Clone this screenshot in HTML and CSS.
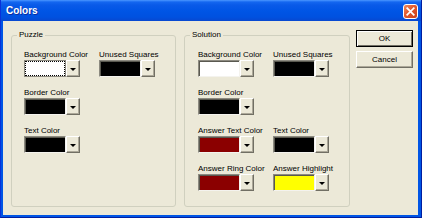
FILE: index.html
```html
<!DOCTYPE html>
<html>
<head>
<meta charset="utf-8">
<link rel="stylesheet" href="styles.css">
</head>
<body>
<div class="window">
  <div class="titlebar">
    <span class="title">Colors</span>
    <span class="close"><svg width="9" height="9" viewBox="0 0 9 9"><path d="M1.2 1.2L7.8 7.8M7.8 1.2L1.2 7.8" stroke="#fff" stroke-width="1.7" stroke-linecap="square"/></svg></span>
  </div>
  <div class="client">
    <fieldset class="group puzzle">
      <legend>Puzzle</legend>
      <div class="grid">
        <div class="field"><div class="lbl">Background Color</div><div class="combo focus"><span class="sw" style="background:#ffffff"></span><span class="dd"><i></i></span></div></div>
        <div class="field"><div class="lbl">Unused Squares</div><div class="combo"><span class="sw" style="background:#000000"></span><span class="dd"><i></i></span></div></div>
        <div class="field"><div class="lbl">Border Color</div><div class="combo"><span class="sw" style="background:#000000"></span><span class="dd"><i></i></span></div></div>
        <div class="field empty"></div>
        <div class="field"><div class="lbl">Text Color</div><div class="combo"><span class="sw" style="background:#000000"></span><span class="dd"><i></i></span></div></div>
      </div>
    </fieldset>
    <fieldset class="group solution">
      <legend>Solution</legend>
      <div class="grid">
        <div class="field"><div class="lbl">Background Color</div><div class="combo"><span class="sw" style="background:#ffffff"></span><span class="dd"><i></i></span></div></div>
        <div class="field"><div class="lbl">Unused Squares</div><div class="combo"><span class="sw" style="background:#000000"></span><span class="dd"><i></i></span></div></div>
        <div class="field"><div class="lbl">Border Color</div><div class="combo"><span class="sw" style="background:#000000"></span><span class="dd"><i></i></span></div></div>
        <div class="field empty"></div>
        <div class="field"><div class="lbl">Answer Text Color</div><div class="combo"><span class="sw" style="background:#8b0000"></span><span class="dd"><i></i></span></div></div>
        <div class="field"><div class="lbl">Text Color</div><div class="combo"><span class="sw" style="background:#000000"></span><span class="dd"><i></i></span></div></div>
        <div class="field"><div class="lbl">Answer Ring Color</div><div class="combo"><span class="sw" style="background:#8b0000"></span><span class="dd"><i></i></span></div></div>
        <div class="field"><div class="lbl">Answer Highlight</div><div class="combo"><span class="sw" style="background:#ffff00"></span><span class="dd"><i></i></span></div></div>
      </div>
    </fieldset>
    <div class="buttons">
      <button class="btn default">OK</button>
      <button class="btn">Cancel</button>
    </div>
  </div>
</div>
</body>
</html>
```
FILE: styles.css
```css
html, body {
  margin: 0;
  padding: 0;
  background: #ffffff;
}
.window {
  width: 422px;
  height: 218px;
  box-sizing: border-box;
  display: flex;
  flex-direction: column;
  background: #0055e5;
  border-left: 1px solid #0831d9;
  border-right: 1px solid #001ea0;
  border-bottom: 1px solid #001ea0;
  font-family: "Liberation Sans", Arial, sans-serif;
  font-size: 8px;
  color: #000;
}
.titlebar {
  height: 21px;
  flex: none;
  display: flex;
  align-items: center;
  justify-content: space-between;
  padding: 0 3px 0 5px;
  background: linear-gradient(#4b97ff 0px, #1467f0 2px, #0a5ae8 5px, #0055e5 11px, #0051e0 17px, #0848d0 21px);
}
.title {
  color: #fff;
  font-weight: bold;
  font-size: 10px;
  text-shadow: 1px 1px 0 #0a2ea0;
}
.close {
  width: 15px;
  height: 15px;
  box-sizing: border-box;
  border: 1px solid #fff;
  border-radius: 3px;
  background: linear-gradient(135deg, #f08a5e 0%, #e2582c 45%, #c8401a 100%);
  display: flex;
  align-items: center;
  justify-content: center;
  margin-top: 1px;
}
.close svg { display: block; }
.client {
  flex: 1;
  margin: 0 3px 2px 2px;
  background: #ece9d8;
  display: flex;
  align-items: flex-start;
  padding: 9px 0 0 8px;
  box-sizing: border-box;
}
.group {
  margin: 0;
  padding: 0 0 0 12px;
  border: 1px solid #d0d0bf;
  border-radius: 3px;
  box-sizing: border-box;
  height: 177px;
}
.puzzle { width: 165px; margin-right: 8px; }
.solution { width: 166px; margin-right: 6px; padding-left: 13px; }
legend {
  margin-left: -7px;
  padding: 0 2px;
  line-height: 10px;
  font-size: 8px;
  color: #000;
}
.solution legend { margin-left: -8px; }
.grid {
  display: grid;
  grid-template-columns: 56px 56px;
  column-gap: 19px;
  row-gap: 11px;
  padding-top: 10px;
}
.lbl {
  line-height: 10px;
  height: 10px;
  white-space: nowrap;
}
.combo {
  display: flex;
  height: 17px;
  width: 56px;
}
.sw {
  width: 42px;
  height: 17px;
  box-sizing: border-box;
  border: 1px solid;
  border-color: #8c8a80 #f4f3ee #f4f3ee #8c8a80;
  box-shadow: inset 1px 1px 0 #5a5950;
  display: block;
}
.focus .sw {
  border: 1px solid #8c8a80;
  box-shadow: none;
  outline: 1px dotted #000;
  outline-offset: -2px;
}
.dd {
  width: 14px;
  height: 17px;
  box-sizing: border-box;
  background: #ece9d8;
  border: 1px solid;
  border-color: #fff #716f64 #716f64 #fff;
  box-shadow: inset -1px -1px 0 #aca899;
  display: flex;
  align-items: center;
  justify-content: center;
}
.dd i {
  display: block;
  width: 0;
  height: 0;
  border-left: 3px solid transparent;
  border-right: 3px solid transparent;
  border-top: 3px solid #000;
  margin-top: 1px;
}
.buttons {
  display: flex;
  flex-direction: column;
  gap: 4px;
  padding-top: 0;
}
.btn {
  width: 57px;
  height: 17px;
  margin: 0;
  padding: 0;
  box-sizing: border-box;
  font-family: "Liberation Sans", Arial, sans-serif;
  font-size: 8px;
  color: #000;
  background: #ece9d8;
  border: 1px solid;
  border-color: #fff #716f64 #716f64 #fff;
  box-shadow: inset -1px -1px 0 #aca899;
}
.btn.default {
  border: 1px solid #000;
  box-shadow: inset 1px 1px 0 #fff, inset -1px -1px 0 #716f64;
}
```
